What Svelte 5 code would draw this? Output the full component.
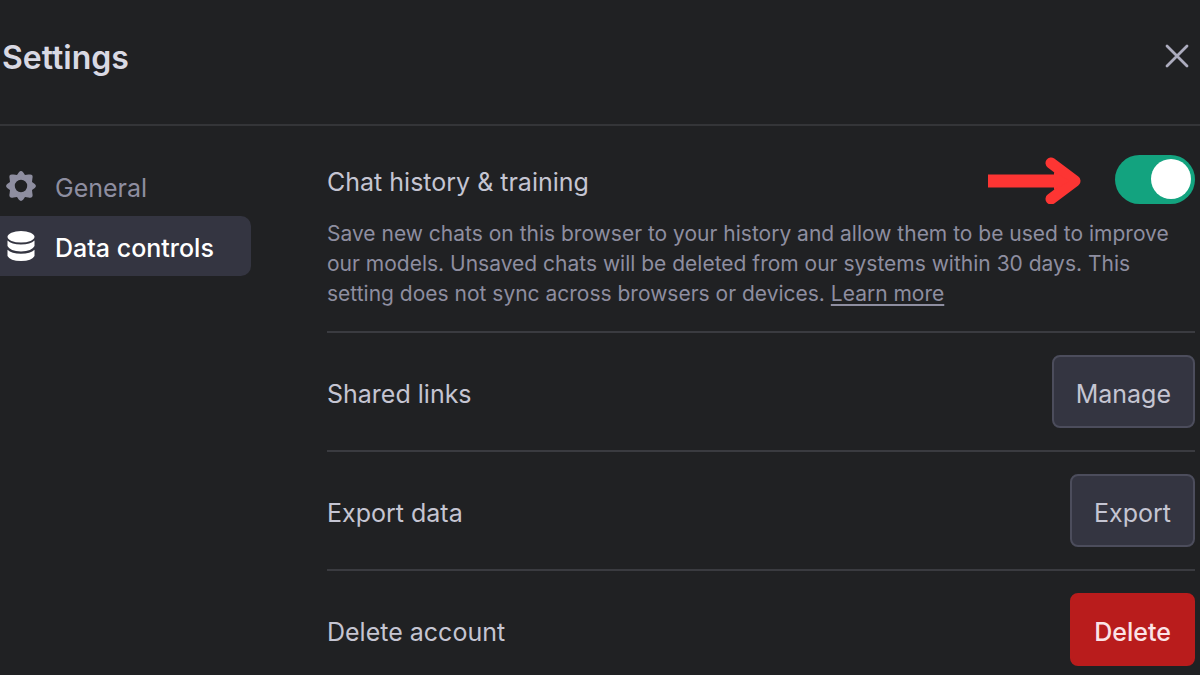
<script>
  let training = $state(true);
  let section = $state('data');

  const actions = [
    { title: 'Shared links', action: 'Manage', danger: false },
    { title: 'Export data', action: 'Export', danger: false },
    { title: 'Delete account', action: 'Delete', danger: true },
  ];
</script>

<div class="settings">
  <header>
    <h1>Settings</h1>
    <button class="close" aria-label="Close">
      <svg width="24" height="24" viewBox="0 0 24 24" fill="none" stroke="currentColor" stroke-width="2.8" stroke-linecap="round">
        <path d="M2 2L22 22M22 2L2 22" />
      </svg>
    </button>
  </header>

  <div class="body">
    <nav>
      <button class="tab" class:active={section === 'general'} onclick={() => (section = 'general')}>
        <svg width="30" height="30" viewBox="0 0 30 30" aria-hidden="true">
          <path
            fill="currentColor"
            fill-rule="evenodd"
            d="M12.9 1.2Q15 -1 17.1 1.2L19 4L22.4 3.6Q25.2 3 26 4Q27 4.8 26.4 7.6L26 11L28.8 12.9Q31 15 28.8 17.1L26 19L26.4 22.4Q27 25.2 26 26Q25.2 27 22.4 26.4L19 26L17.1 28.8Q15 31 12.9 28.8L11 26L7.6 26.4Q4.8 27 4 26Q3 25.2 3.6 22.4L4 19L1.2 17.1Q-1 15 1.2 12.9L4 11L3.6 7.6Q3 4.8 4 4Q4.8 3 7.6 3.6L11 4ZM15 8.8A6.2 6.2 0 1 0 15 21.2A6.2 6.2 0 1 0 15 8.8Z"
          />
        </svg>
        <span>General</span>
      </button>
      <button class="tab" class:active={section === 'data'} onclick={() => (section = 'data')}>
        <svg width="30" height="30" viewBox="0 0 30 30" fill="currentColor" aria-hidden="true">
          <ellipse cx="15" cy="5.8" rx="13.5" ry="5.8" />
          <path d="M1.5 9.6Q5.5 13.6 15 13.6T28.5 9.6V15Q26 20.4 15 20.4T1.5 15Z" />
          <path d="M1.5 18.8Q5.5 22.8 15 22.8T28.5 18.8V25Q26 30 15 30T1.5 25Z" />
        </svg>
        <span>Data controls</span>
      </button>
    </nav>

    <main>
      <section class="training">
        <div class="row">
          <label for="training">Chat history &amp; training</label>
          <svg class="arrow" width="94" height="50" viewBox="0 0 94 50" fill="none" stroke="#fd3533" aria-hidden="true">
            <path d="M1 27H82" stroke-width="13" />
            <path d="M64 9L88 27L64 45" stroke-width="11" stroke-linecap="round" stroke-linejoin="round" />
            <path d="M67 18L83 27L67 36Z" fill="#fd3533" stroke="none" />
          </svg>
          <input id="training" type="checkbox" role="switch" bind:checked={training} />
        </div>
        <p>
          Save new chats on this browser to your history and allow them to be used to improve our
          models. Unsaved chats will be deleted from our systems within 30 days. This setting does
          not sync across browsers or devices. <a href="#learn">Learn more</a>
        </p>
      </section>
      {#each actions as item}
        <section class="row item">
          <h2>{item.title}</h2>
          <button class="action" class:danger={item.danger}>{item.action}</button>
        </section>
      {/each}
    </main>
  </div>
</div>

<style>
  :global(body) {
    margin: 0;
    background: #202123;
  }
  .settings {
    font-family: Inter, 'Liberation Sans', sans-serif;
    color: #c8c8d4;
    background: #202123;
  }
  button {
    font: inherit;
    border: 0;
    cursor: pointer;
  }
  header {
    display: flex;
    align-items: center;
    justify-content: space-between;
    box-sizing: border-box;
    min-height: 126px;
    padding: 0 11px 12px 2px;
    border-bottom: 2px solid #343538;
  }
  h1 {
    margin: 0;
    padding-top: 4px;
    font-size: 32px;
    line-height: 40px;
    font-weight: 600;
    color: #d9d9e3;
  }
  .close {
    display: flex;
    padding: 4px;
    margin: -4px;
    background: none;
    color: #acacbe;
  }
  .body {
    display: grid;
    grid-template-columns: 251px 1fr;
    column-gap: 76px;
    padding-right: 5px;
  }
  nav {
    padding-top: 30px;
  }
  .tab {
    display: flex;
    align-items: center;
    gap: 19px;
    box-sizing: border-box;
    width: 100%;
    height: 60px;
    padding: 0 6px;
    border-radius: 0 10px 10px 0;
    background: none;
    color: #8e8ea0;
    font-size: 25px;
  }
  .tab span {
    padding-top: 4px;
  }
  .tab.active {
    background: #343541;
    color: #fff;
    font-weight: 500;
  }
  main {
    min-width: 0;
  }
  .row {
    display: flex;
    align-items: center;
  }
  .training {
    padding: 28px 0 22px;
  }
  label,
  h2 {
    flex: 1;
    margin: 0;
    padding-top: 5px;
    font-size: 25px;
    line-height: 32px;
    font-weight: 400;
    color: #c5c5d2;
  }
  .arrow {
    margin-right: 34px;
  }
  input {
    appearance: none;
    display: flex;
    align-items: center;
    box-sizing: border-box;
    width: 80px;
    height: 49px;
    margin: 0;
    padding: 0 4px;
    border-radius: 25px;
    background: #565869;
    cursor: pointer;
  }
  input::before {
    content: '';
    width: 40px;
    height: 40px;
    border-radius: 50%;
    background: #fff;
  }
  input:checked {
    justify-content: flex-end;
    background: #13a37f;
  }
  p {
    margin: 15px 0 0;
    padding-right: 20px;
    font-size: 21px;
    line-height: 30px;
    color: #8e8ea0;
  }
  a {
    color: inherit;
    text-underline-offset: 3px;
  }
  .item {
    padding: 22px 0;
    border-top: 2px solid #3a3b40;
  }
  .action {
    box-sizing: border-box;
    min-height: 73px;
    padding: 4px 22px 0;
    border: 2px solid #4c4d5c;
    border-radius: 8px;
    background: #343541;
    color: #c5c5d2;
    font-size: 25px;
  }
  .action.danger {
    border-color: #b91c1c;
    background: #b91c1c;
    color: #fbe3e6;
    font-weight: 500;
  }
</style>
